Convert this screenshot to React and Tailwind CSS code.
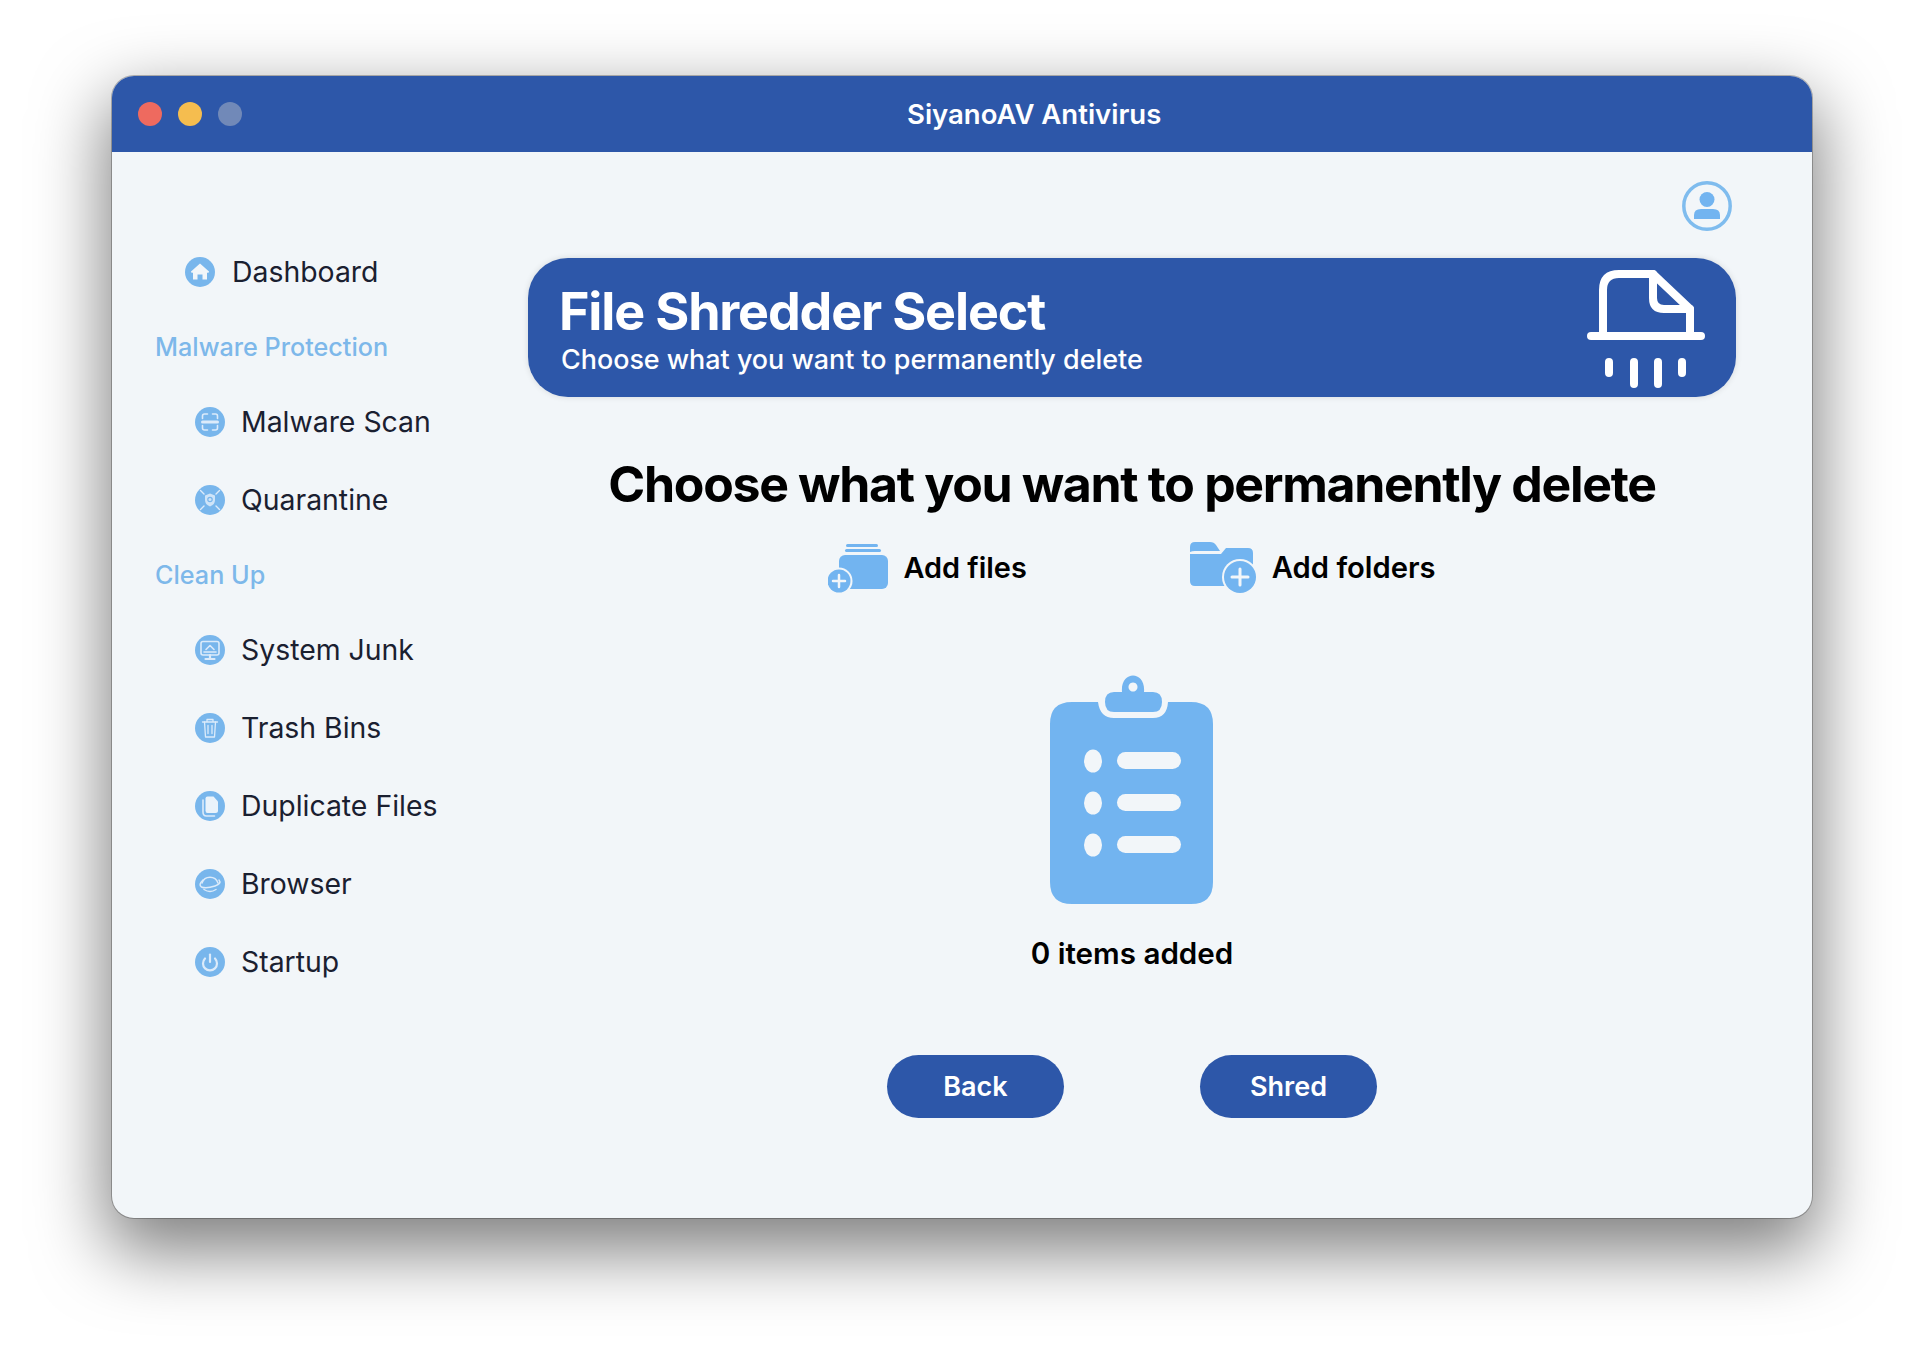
const BLUE = "#72b4f0";
const BG = "#f2f6f9";

function Badge({ children }) {
  return (
    <svg width="30" height="30" viewBox="0 0 30 30" className="shrink-0">
      <circle cx="15" cy="15" r="15" fill="#78b6ec" />
      {children}
    </svg>
  );
}

const w = "#dcebfa";
const icons = {
  home: <path d="M15 6.5 L24 14.4 Q24.5 15.6 22.5 15.8 L22 15.8 L22 22.5 L17.5 22.5 L17.5 17.5 L12.5 17.5 L12.5 22.5 L8 22.5 L8 15.8 L7.5 15.8 Q5.5 15.6 6 14.4 Z" fill="#f2f6f9" />,
  scan: (
    <g fill="none" stroke={w} strokeWidth="1.6" strokeLinecap="round">
      <path d="M7.5 11.5 V9 Q7.5 7 9.5 7 H12.5 M17.5 7 H20.5 Q22.5 7 22.5 9 V11.5 M7.5 18.5 V21 Q7.5 23 9.5 23 H12.5 M17.5 23 H20.5 Q22.5 23 22.5 21 V18.5" />
      <path d="M7.5 15 H22.5" strokeWidth="3" />
    </g>
  ),
  quarantine: (
    <g fill="none" stroke={w} strokeWidth="1.4" strokeLinecap="round">
      <path d="M5.5 5.5 L9 9 M24.5 5.5 L21 9 M5.5 24.5 L9 21 M24.5 24.5 L21 21" />
      <path d="M15 8.5 L20 10.5 V15 Q20 19.5 15 21.5 Q10 19.5 10 15 V10.5 Z" fill="#cfe4f8" stroke="none" />
      <circle cx="15" cy="14.5" r="2.2" stroke="#78b6ec" strokeWidth="1.2" />
    </g>
  ),
  system: (
    <g fill="none" stroke={w} strokeWidth="1.6" strokeLinecap="round" strokeLinejoin="round">
      <rect x="6" y="6.5" width="18" height="13.5" rx="2" />
      <path d="M10.5 24 H19.5 M15 20 V24" strokeWidth="2.2" />
      <path d="M11 14.5 L15 10.5 L19 14.5" />
      <path d="M9 17 H21" />
    </g>
  ),
  trash: (
    <g fill="none" stroke={w} strokeWidth="1.3" strokeLinecap="round" strokeLinejoin="round">
      <path d="M7.5 9 H22.5 M12 9 V6.5 H18 V9" />
      <path d="M9.5 9 L10.5 24 H19.5 L20.5 9" />
      <path d="M13 12.5 V20.5 M17 12.5 V20.5" />
    </g>
  ),
  dup: (
    <g>
      <path d="M8 9 V21 Q8 25 11.5 25 H19.5" fill="none" stroke={w} strokeWidth="1.6" strokeLinecap="round" />
      <path d="M12.5 5.5 H18.5 L23 10.5 V19.5 Q23 22 20.5 22 H12.5 Q10.5 22 10.5 19.5 V7.5 Q10.5 5.5 12.5 5.5 Z" fill="#eaf3fb" />
    </g>
  ),
  browser: (
    <g fill="none" stroke={w} strokeWidth="1.5" strokeLinecap="round">
      <path d="M7 14 A8.5 8.5 0 0 1 23 14" />
      <path d="M8 11 Q3 16 6.5 18 Q11 20 20 17 Q27 14.5 24 11" />
      <path d="M9 20.5 Q15 24.5 21 20.5" />
    </g>
  ),
  power: (
    <g fill="none" stroke={w} strokeWidth="2.2" strokeLinecap="round">
      <path d="M10 11.5 A7 7 0 1 0 20 11.5" />
      <path d="M15 7.5 V15" />
    </g>
  ),
};

function Item({ icon, label }) {
  return (
    <div className="flex h-[78px] items-center gap-[16px] pl-[40px]">
      <Badge>{icons[icon]}</Badge>
      <span className="text-[28.4px] leading-none text-[#1a2030]">{label}</span>
    </div>
  );
}

function SectionLabel({ children }) {
  return (
    <div className="flex h-[72px] items-center pt-[2px] text-[25.2px] font-medium text-[#7db8ea]">{children}</div>
  );
}

function AddFilesIcon() {
  return (
    <svg width="60" height="50" viewBox="0 0 60 50" className="shrink-0">
      <rect x="18" y="1" width="32" height="3" rx="1.5" fill={BLUE} />
      <rect x="17" y="6" width="36" height="3" rx="1.5" fill={BLUE} />
      <rect x="11" y="12" width="49" height="34" rx="6" fill={BLUE} />
      <circle cx="11" cy="38" r="13.5" fill={BG} />
      <circle cx="11" cy="38" r="11.5" fill={BLUE} />
      <path d="M11 32 V44 M5 38 H17" stroke={BG} strokeWidth="2.5" strokeLinecap="round" />
    </svg>
  );
}

function AddFolderIcon() {
  return (
    <svg width="66" height="52" viewBox="0 0 66 52" className="shrink-0">
      <path d="M0 5 Q0 0 5 0 H20 Q24 0 26 3 L30 9 H5 Q2 9 0 10 Z" fill={BLUE} />
      <path d="M0 12 H31 L36 6 H58 Q63 6 63 11 V39 Q63 44 58 44 H5 Q0 44 0 39 Z" fill={BLUE} />
      <circle cx="50" cy="35" r="18" fill={BG} />
      <circle cx="50" cy="35" r="16" fill={BLUE} />
      <path d="M50 27 V43 M42 35 H58" stroke={BG} strokeWidth="3" strokeLinecap="round" />
    </svg>
  );
}

function ClipboardIcon() {
  return (
    <svg width="163" height="230" viewBox="0 0 163 230" className="shrink-0">
      <path d="M22 28 H48 Q50 44 64 44 H103 Q117 44 118 28 H141 Q163 28 163 50 V208 Q163 230 141 230 H22 Q0 230 0 208 V50 Q0 28 22 28 Z" fill={BLUE} />
      <path
        fillRule="evenodd"
        d="M72 18 C70 -4 96 -4 94 18 H103 Q112 18 112 28 Q112 38 103 38 H64 Q55 38 55 28 Q55 18 64 18 Z M83 8.5 A4.5 4.5 0 1 0 83.01 8.5 Z"
        fill={BLUE}
      />
      <ellipse cx="43" cy="87" rx="9" ry="11.5" fill={BG} />
      <ellipse cx="43" cy="129" rx="9" ry="11.5" fill={BG} />
      <ellipse cx="43" cy="171" rx="9" ry="11.5" fill={BG} />
      <rect x="67" y="78" width="64" height="17" rx="8.5" fill={BG} />
      <rect x="67" y="120" width="64" height="17" rx="8.5" fill={BG} />
      <rect x="67" y="162" width="64" height="17" rx="8.5" fill={BG} />
    </svg>
  );
}

function ShredderIcon() {
  return (
    <svg width="120" height="122" viewBox="0 0 120 122" className="mt-[6px] shrink-0">
      <g fill="none" stroke="#fff" strokeWidth="8" strokeLinecap="round" strokeLinejoin="round">
        <path d="M16 66 V20 Q16 4 32 4 H66 L103 39 V66" />
        <path d="M66 4 V28 Q66 39 77 39 H103" />
        <path d="M4 66 H114" />
        <path d="M22 92 V103 M47 92 V114 M71 92 V114 M95 92 V103" />
      </g>
    </svg>
  );
}

function Avatar() {
  return (
    <svg width="50" height="50" viewBox="0 0 50 50">
      <circle cx="25" cy="25" r="23.2" fill="none" stroke="#7fbcee" strokeWidth="3.5" />
      <circle cx="25" cy="18.5" r="7.5" fill={BLUE} />
      <path d="M12 38 V34 Q12 28 19 28 H31 Q38 28 38 34 V38 Z" fill={BLUE} />
    </svg>
  );
}

export default function App() {
  return (
    <div className="min-h-[1366px] bg-white pl-[112px] pt-[76px] font-['Inter',sans-serif]">
      <div className="flex h-[1142px] w-[1700px] flex-col overflow-hidden rounded-[22px] bg-[#f2f6f9] shadow-[0_0_0_1px_rgba(0,0,0,0.25),0_28px_70px_6px_rgba(0,0,0,0.5)]">
        <div className="flex h-[76px] shrink-0 items-center bg-[#2d57a9] pl-[26px]">
          <div className="flex gap-[16px]">
            <span className="h-6 w-6 rounded-full bg-[#ee6a5f]" />
            <span className="h-6 w-6 rounded-full bg-[#f5bd4f]" />
            <span className="h-6 w-6 rounded-full bg-[#7189b8]" />
          </div>
          <span className="ml-[665px] mt-[2px] text-[27.5px] font-semibold text-white">SiyanoAV Antivirus</span>
        </div>
        <div className="flex flex-1">
          <aside className="w-[416px] shrink-0 pl-[43px] pt-[81px]">
            <div className="ml-[30px] flex h-[78px] items-center gap-[17px]">
              <Badge>{icons.home}</Badge>
              <span className="text-[28.4px] leading-none text-[#1a2030]">Dashboard</span>
            </div>
            <SectionLabel>Malware Protection</SectionLabel>
            <Item icon="scan" label="Malware Scan" />
            <Item icon="quarantine" label="Quarantine" />
            <SectionLabel>Clean Up</SectionLabel>
            <Item icon="system" label="System Junk" />
            <Item icon="trash" label="Trash Bins" />
            <Item icon="dup" label="Duplicate Files" />
            <Item icon="browser" label="Browser" />
            <Item icon="power" label="Startup" />
          </aside>
          <main className="flex w-[1208px] flex-col items-center">
            <div className="flex w-full justify-end pr-[4px] pt-[29px]">
              <Avatar />
            </div>
            <div className="mt-[27px] flex h-[139px] w-full items-center justify-between rounded-[40px] bg-[#2d57a9] pl-[31px] pr-[29px] shadow-[0_0_6px_rgba(0,0,0,0.12)]">
              <div className="mt-[3px] flex flex-col">
                <span className="text-[52px] font-bold leading-[60px] tracking-[-1.15px] text-white">File Shredder Select</span>
                <span className="ml-[2px] text-[26.9px] font-medium leading-[34px] text-white">Choose what you want to permanently delete</span>
              </div>
              <ShredderIcon />
            </div>
            <h1 className="mt-[56px] text-[50px] font-bold leading-[62px] tracking-[-1.33px] text-black">Choose what you want to permanently delete</h1>
            <div className="mt-[25px] flex h-[56px] items-center">
              <div className="flex items-center gap-[15px]">
                <AddFilesIcon />
                <span className="text-[28.9px] font-semibold text-black">Add files</span>
              </div>
              <div className="ml-[163px] flex items-center gap-[16px]">
                <AddFolderIcon />
                <span className="text-[29.2px] font-semibold text-black">Add folders</span>
              </div>
            </div>
            <div className="mr-[2px] mt-[78px]">
              <ClipboardIcon />
            </div>
            <div className="mt-[30px] text-[29.6px] font-semibold leading-[38px] text-black">0 items added</div>
            <div className="mt-[83px] flex gap-[136px]">
              <button className="h-[63px] w-[177px] rounded-full bg-[#2d57a9] pt-[2px] text-[27px] font-semibold text-white">Back</button>
              <button className="h-[63px] w-[177px] rounded-full bg-[#2d57a9] pt-[2px] text-[27px] font-semibold text-white">Shred</button>
            </div>
          </main>
        </div>
      </div>
    </div>
  );
}
